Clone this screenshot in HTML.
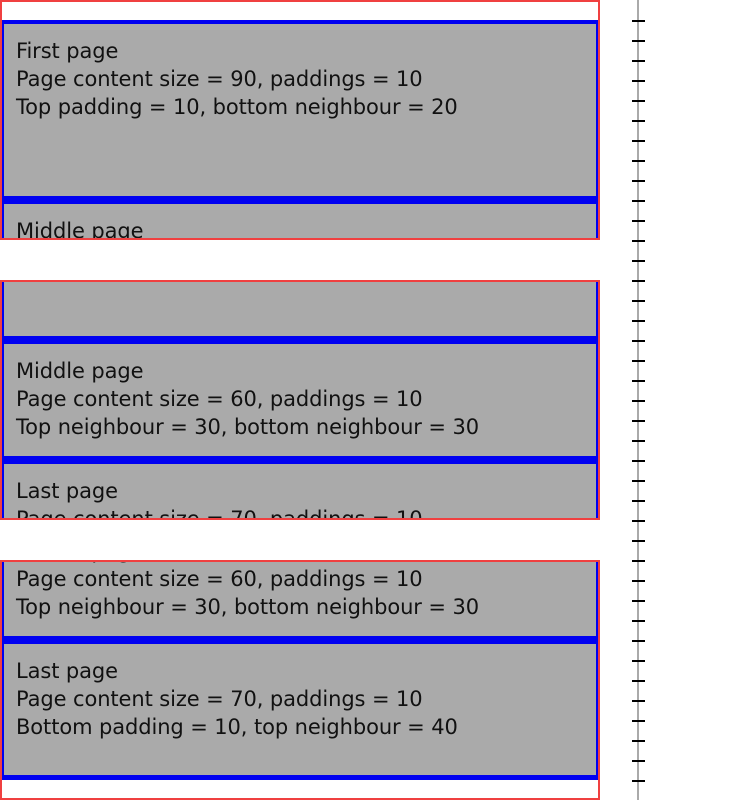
<!DOCTYPE html>
<html><head><meta charset="utf-8"><style>
html,body{margin:0;padding:0;background:#fff;width:750px;height:800px;overflow:hidden}
.vp{position:absolute;left:0;width:600px;height:240px;overflow:hidden}
.vp .frame{position:absolute;left:0;top:0;width:596px;height:236px;border:2px solid #f04040;z-index:5}
.col{position:absolute;left:2px;width:596px}
.blue{position:absolute;left:0;width:596px;background:#0000f0}
.pg{position:absolute;left:0;width:592px;background:#aaa;border-left:2px solid #0000f0;border-right:2px solid #0000f0}
.pg .t{position:absolute;left:12px;top:13px;font-family:"DejaVu Sans","Liberation Sans",sans-serif;font-size:21px;letter-spacing:-0.1px;line-height:28px;color:#111;white-space:nowrap}
.ruler{position:absolute;left:637px;top:0;width:2px;height:800px;background:#aaa}
.tick{position:absolute;left:632px;width:13px;height:2px;background:#000}
</style></head><body>
<div class="vp" style="top:0"><div class="col" style="top:0" id="c1">
<div class="blue" style="top:20px;height:4px"></div>
<div class="pg" style="top:24px;height:172px"><div class="t">First page<br>Page content size = 90, paddings = 10<br>Top padding = 10, bottom neighbour = 20</div></div>
<div class="blue" style="top:196px;height:8px"></div>
<div class="pg" style="top:204px;height:112px"><div class="t">Middle page<br>Page content size = 60, paddings = 10<br>Top neighbour = 30, bottom neighbour = 30</div></div>
</div><div class="frame"></div></div>

<div class="vp" style="top:280px"><div class="col" style="top:-140px">
<div class="pg" style="top:24px;height:172px"></div>
<div class="blue" style="top:196px;height:8px"></div>
<div class="pg" style="top:204px;height:112px"><div class="t">Middle page<br>Page content size = 60, paddings = 10<br>Top neighbour = 30, bottom neighbour = 30</div></div>
<div class="blue" style="top:316px;height:8px"></div>
<div class="pg" style="top:324px;height:131px"><div class="t">Last page<br>Page content size = 70, paddings = 10<br>Bottom padding = 10, top neighbour = 40</div></div>
</div><div class="frame"></div></div>

<div class="vp" style="top:560px"><div class="col" style="top:-240px">
<div class="pg" style="top:204px;height:112px"><div class="t">Middle page<br>Page content size = 60, paddings = 10<br>Top neighbour = 30, bottom neighbour = 30</div></div>
<div class="blue" style="top:316px;height:8px"></div>
<div class="pg" style="top:324px;height:131px"><div class="t">Last page<br>Page content size = 70, paddings = 10<br>Bottom padding = 10, top neighbour = 40</div></div>
<div class="blue" style="top:455px;height:5px"></div>
</div><div class="frame"></div></div>

<div class="ruler"></div>
<div class="tick" style="top:20px"></div><div class="tick" style="top:40px"></div><div class="tick" style="top:60px"></div><div class="tick" style="top:80px"></div><div class="tick" style="top:100px"></div><div class="tick" style="top:120px"></div><div class="tick" style="top:140px"></div><div class="tick" style="top:160px"></div><div class="tick" style="top:180px"></div><div class="tick" style="top:200px"></div><div class="tick" style="top:220px"></div><div class="tick" style="top:240px"></div><div class="tick" style="top:260px"></div><div class="tick" style="top:280px"></div><div class="tick" style="top:300px"></div><div class="tick" style="top:320px"></div><div class="tick" style="top:340px"></div><div class="tick" style="top:360px"></div><div class="tick" style="top:380px"></div><div class="tick" style="top:400px"></div><div class="tick" style="top:420px"></div><div class="tick" style="top:440px"></div><div class="tick" style="top:460px"></div><div class="tick" style="top:480px"></div><div class="tick" style="top:500px"></div><div class="tick" style="top:520px"></div><div class="tick" style="top:540px"></div><div class="tick" style="top:560px"></div><div class="tick" style="top:580px"></div><div class="tick" style="top:600px"></div><div class="tick" style="top:620px"></div><div class="tick" style="top:640px"></div><div class="tick" style="top:660px"></div><div class="tick" style="top:680px"></div><div class="tick" style="top:700px"></div><div class="tick" style="top:720px"></div><div class="tick" style="top:740px"></div><div class="tick" style="top:760px"></div><div class="tick" style="top:780px"></div>
</body></html>
